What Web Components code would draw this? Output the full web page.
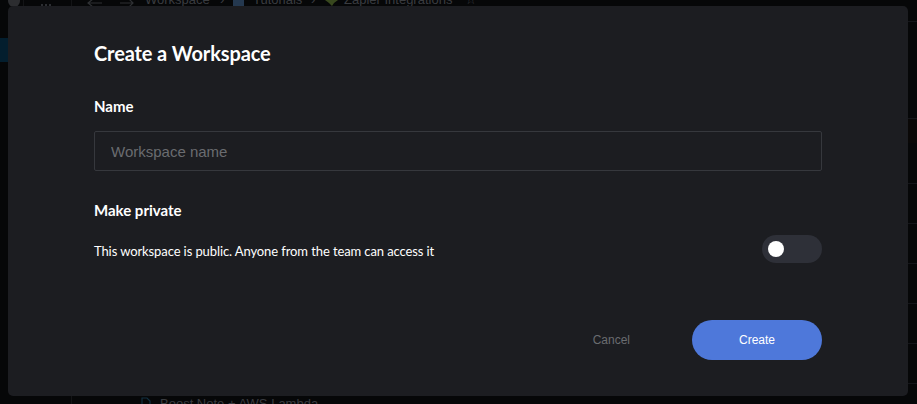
<!DOCTYPE html>
<html>
<head>
<meta charset="utf-8">
<title>Create a Workspace</title>
<style>
  html, body { margin: 0; height: 100%; background: #060708; overflow: hidden; }
</style>
</head>
<body>
<app-backdrop></app-backdrop>
<workspace-dialog>
  <dialog-title>Create a Workspace</dialog-title>
  <form-field label="Name" style="margin-bottom:29px">
    <text-box placeholder="Workspace name"></text-box>
  </form-field>
  <form-field label="Make private">
    <switch-row>This workspace is public. Anyone from the team can access it</switch-row>
  </form-field>
  <button-row slot="footer">
    <dialog-button>Cancel</dialog-button>
    <dialog-button primary>Create</dialog-button>
  </button-row>
</workspace-dialog>

<script>
class AppBackdrop extends HTMLElement {
  constructor() {
    super();
    this.attachShadow({ mode: "open" });
    this.shadowRoot.innerHTML = `
      <style>
        :host { position: absolute; inset: 0; display: block; overflow: hidden;
          font-family: "Liberation Sans", sans-serif; font-size: 13px; color: #3a3c40; }
        div, span, svg { position: absolute; }
        .crumb { top: -8px; white-space: nowrap; }
        .vline { top: 0; width: 1px; background: #131416; }
        .row { left: 908px; right: 0; height: 1px; background: #15161a; }
        .active { left: 0; top: 38px; width: 8px; height: 24px; background: #031e2e; }
      </style>
      <div class="vline" style="left:23px;height:6px"></div>
      <div class="vline" style="left:71px;height:404px"></div>
      <div class="active"></div>
      <svg style="left:8px;top:0" width="14" height="6"><circle cx="6" cy="1" r="6" fill="#2c2d30"/></svg>
      <svg style="left:40px;top:2px" width="14" height="4"><g fill="#3a3c40"><circle cx="2" cy="3" r="1"/><circle cx="6" cy="3" r="1"/><circle cx="10" cy="3" r="1"/></g></svg>
      <svg style="left:87px;top:0" width="48" height="6" fill="none" stroke="#2e3033" stroke-width="1.2"><path d="M6 -1 L1 3 L6 7 M1 3 H15 M33 3 H46 M42 -1 L46 3 L42 7"/></svg>
      <span class="crumb" style="left:145px">Workspace</span>
      <span class="crumb" style="left:220px">›</span>
      <div style="left:233px;top:0;height:6px;width:11px;background:#24384f"></div>
      <span class="crumb" style="left:253px">Tutorials</span>
      <span class="crumb" style="left:311px">›</span>
      <svg style="left:325px;top:0" width="13" height="6"><path d="M0 0 H13 L9 3 L7 6 L4 3 Z" fill="#38481e"/></svg>
      <span class="crumb" style="left:344px">Zapier Integrations</span>
      <span class="crumb" style="left:465px">☆</span>
      <div class="row" style="top:21px"></div>
      <div class="row" style="top:118px"></div>
      <div style="left:908px;right:0;top:119px;height:24px;background:#0a0807"></div>
      <div class="row" style="top:183px"></div>
      <div class="row" style="top:223px"></div>
      <div class="row" style="top:263px"></div>
      <div class="row" style="top:303px"></div>
      <div class="row" style="top:343px"></div>
      <div class="row" style="top:383px"></div>
      <svg style="left:141px;top:397px" width="10" height="7" fill="none" stroke="#123040" stroke-width="1.2"><path d="M1 8 V1 H6 L9 4 V8"/></svg>
      <span style="left:160px;top:396px;white-space:nowrap">Boost Note + AWS Lambda</span>
    `;
  }
}

class WorkspaceDialog extends HTMLElement {
  constructor() {
    super();
    this.attachShadow({ mode: "open" });
    this.shadowRoot.innerHTML = `
      <style>
        :host { position: absolute; left: 8px; top: 6px; width: 900px; height: 390px;
          box-sizing: border-box; padding: 34px 86px 36px; display: flex; flex-direction: column;
          background: #1c1d21; border-radius: 5px; color: #fff; }
        .body { flex: 1; display: flex; flex-direction: column; }
      </style>
      <div class="body"><slot></slot></div>
      <slot name="footer"></slot>
    `;
  }
}

class DialogTitle extends HTMLElement {
  constructor() {
    super();
    this.attachShadow({ mode: "open" });
    this.shadowRoot.innerHTML = `
      <style>
        :host { display: block; font: 700 20px/26px "Lato", sans-serif; letter-spacing: -0.12px; margin-bottom: 30px; }
      </style>
      <slot></slot>
    `;
  }
}

class FormField extends HTMLElement {
  constructor() {
    super();
    this.attachShadow({ mode: "open" });
    this.shadowRoot.innerHTML = `
      <style>
        :host { display: block; margin-bottom: 30px; }
        label { display: block; font: 700 15px/20px "Lato", sans-serif; margin-bottom: 15px; }
      </style>
      <label></label>
      <slot></slot>
    `;
    this.shadowRoot.querySelector("label").textContent = this.getAttribute("label");
  }
}

class TextBox extends HTMLElement {
  constructor() {
    super();
    this.attachShadow({ mode: "open" });
    this.shadowRoot.innerHTML = `
      <style>
        :host { display: block; }
        input { display: block; width: 100%; height: 40px; box-sizing: border-box; padding: 0 16px;
          background: transparent; border: 1px solid #36383d; border-radius: 2px; outline: none;
          color: #fff; font: 15px "Liberation Sans", sans-serif; }
        input::placeholder { color: #6a6c70; opacity: 1; }
      </style>
      <input type="text">
    `;
    this.shadowRoot.querySelector("input").placeholder = this.getAttribute("placeholder") || "";
  }
}

class SwitchRow extends HTMLElement {
  constructor() {
    super();
    this.attachShadow({ mode: "open" });
    this.shadowRoot.innerHTML = `
      <style>
        :host { display: flex; align-items: center; justify-content: space-between;
          font: 400 13px/20px "Lato", sans-serif; letter-spacing: -0.1px; }
        .label { padding-top: 4px; }
        .track { width: 60px; height: 28px; box-sizing: border-box; padding: 6px; border-radius: 14px;
          background: #2e3038; }
        .knob { width: 16px; height: 16px; border-radius: 50%; background: #fff; }
      </style>
      <span class="label"><slot></slot></span>
      <div class="track"><div class="knob"></div></div>
    `;
  }
}

class ButtonRow extends HTMLElement {
  constructor() {
    super();
    this.attachShadow({ mode: "open" });
    this.shadowRoot.innerHTML = `
      <style>
        :host { display: flex; justify-content: flex-end; align-items: center; gap: 62px; }
      </style>
      <slot></slot>
    `;
  }
}

class DialogButton extends HTMLElement {
  constructor() {
    super();
    this.attachShadow({ mode: "open" });
    this.shadowRoot.innerHTML = `
      <style>
        :host { display: block; font: 12px/40px "Liberation Sans", sans-serif; color: #6a6c70; text-align: center; }
        :host([primary]) { width: 130px; height: 40px; border-radius: 20px; background: #4e78da; color: #fff; }
      </style>
      <slot></slot>
    `;
  }
}

customElements.define("app-backdrop", AppBackdrop);
customElements.define("workspace-dialog", WorkspaceDialog);
customElements.define("dialog-title", DialogTitle);
customElements.define("form-field", FormField);
customElements.define("text-box", TextBox);
customElements.define("switch-row", SwitchRow);
customElements.define("button-row", ButtonRow);
customElements.define("dialog-button", DialogButton);
</script>
</body>
</html>
